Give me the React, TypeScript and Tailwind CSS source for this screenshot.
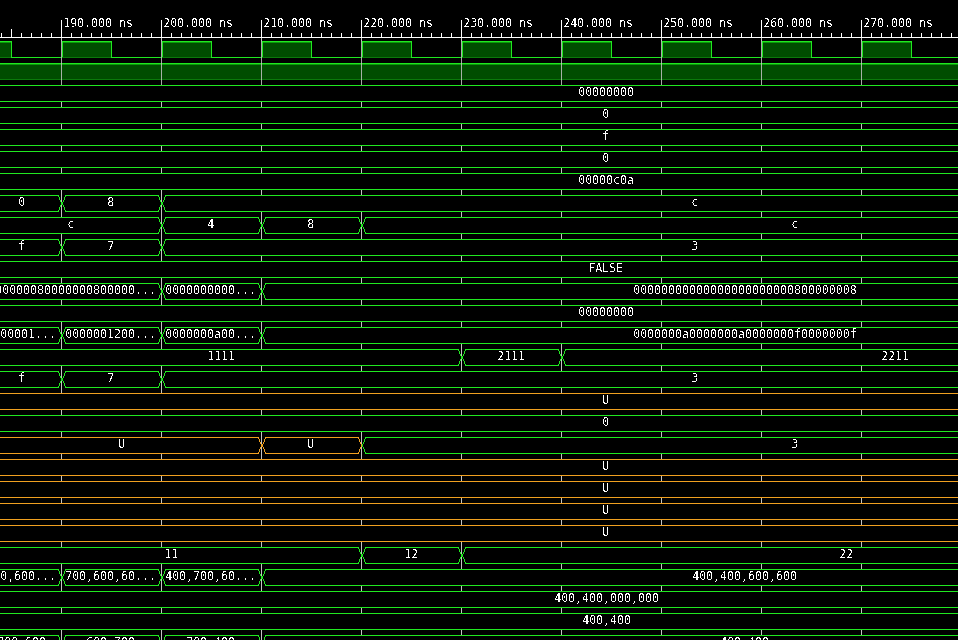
import React from 'react';

const GREEN = '#20e820';
const ORANGE = '#f0a020';
const GRID = '#c4c4c4';
const MAJORS = [61, 161, 261, 361, 461, 561, 661, 761, 861];
const WIDTH = 958;
const CHAR = 7;

interface Label {
  x: number;
  text: string;
  start?: boolean; // left aligned, used by the long packed vectors
}

interface Trace {
  edges?: number[];
  labels: Label[];
  orange?: boolean;
  orangeUntil?: number;
}

const mid = (x: number, text: string): Label => ({ x, text });
const from = (x: number, text: string): Label => ({ x, text, start: true });

const traces: Trace[] = [
  { labels: [mid(606, '00000000')] },
  { labels: [mid(606, '0')] },
  { labels: [mid(606, 'f')] },
  { labels: [mid(606, '0')] },
  { labels: [mid(606, '00000c0a')] },
  { edges: [61, 161], labels: [mid(22, '0'), mid(111, '8'), mid(695, 'c')] },
  { edges: [161, 261, 361], labels: [mid(71, 'c'), mid(211, '4'), mid(311, '8'), mid(795, 'c')] },
  { edges: [61, 161], labels: [mid(22, 'f'), mid(111, '7'), mid(695, '3')] },
  { labels: [mid(606, 'FALSE')] },
  {
    edges: [161, 261],
    labels: [
      from(-5, '00000080000000800000...'),
      from(165, '0000000000...'),
      from(633, '00000000000000000000000800000008'),
    ],
  },
  { labels: [mid(606, '00000000')] },
  {
    edges: [61, 161, 261],
    labels: [
      from(0, '00001...'),
      from(65, '0000001200...'),
      from(165, '0000000a00...'),
      from(633, '0000000a0000000a0000000f0000000f'),
    ],
  },
  { edges: [461, 561], labels: [mid(221, '1111'), mid(511, '2111'), mid(895, '2211')] },
  { edges: [61, 161], labels: [mid(22, 'f'), mid(111, '7'), mid(695, '3')] },
  { orange: true, labels: [mid(606, 'U')] },
  { labels: [mid(606, '0')] },
  { edges: [261, 361], orangeUntil: 361, labels: [mid(122, 'U'), mid(311, 'U'), mid(795, '3')] },
  { orange: true, labels: [mid(606, 'U')] },
  { orange: true, labels: [mid(606, 'U')] },
  { orange: true, labels: [mid(606, 'U')] },
  { orange: true, labels: [mid(606, 'U')] },
  { edges: [361, 461], labels: [mid(171, '11'), mid(411, '12'), mid(846, '22')] },
  {
    edges: [61, 161, 261],
    labels: [
      from(0, '0,600...'),
      from(65, '700,600,60...'),
      from(165, '400,700,60...'),
      from(692, '400,400,600,600'),
    ],
  },
  { labels: [mid(607, '400,400,000,000')] },
  { labels: [mid(607, '400,400')] },
  { edges: [61, 161, 261], labels: [mid(22, '700,600'), mid(111, '600,700'), mid(211, '700,400'), mid(745, '400,400')] },
];

function Ruler() {
  const ticks = [];
  for (let x = 1; x < WIDTH; x += 10) ticks.push(x);
  return (
    <svg width={WIDTH} height={41} className="block">
      {/* threshold the glyph edges so the text looks like the viewer's bitmap font */}
      <defs>
        <filter id="crisp" x="-5%" y="-20%" width="110%" height="140%" colorInterpolationFilters="sRGB">
          <feComponentTransfer>
            <feFuncA type="discrete" tableValues="0 0 0 1 1" />
          </feComponentTransfer>
        </filter>
      </defs>
      <g shapeRendering="crispEdges">
        {ticks.map((x) => (
          <rect key={x} x={x} y={x === 11 ? 29 : 33} width={1} height={x === 11 ? 8 : 4} fill="#fff" />
        ))}
        <rect x={0} y={37} width={WIDTH} height={1} fill="#fff" />
        {MAJORS.map((x) => (
          <g key={x}>
            <rect x={x} y={20} width={1} height={17} fill="#fff" />
            <rect x={x} y={38} width={1} height={3} fill={GRID} />
          </g>
        ))}
      </g>
      {MAJORS.map((x, i) => (
        <text key={x} x={x + 2.15} y={27} filter="url(#crisp)" className="fill-white text-[11.627px]">
          {190 + i * 10}.000 ns
        </text>
      ))}
    </svg>
  );
}

function Pulse({ x, w }: { x: number; w: number }) {
  return (
    <g>
      <rect x={x} y={0} width={w} height={16} fill="#004d00" />
      <rect x={x} y={1} width={w} height={1} fill="#0a9a0a" />
      <rect x={x} y={0} width={w + 1} height={1} fill={GREEN} />
      <rect x={x} y={16} width={w} height={1} fill="#0a7a0a" />
      <rect x={x + 1} y={0} width={1} height={16} fill={GREEN} />
      <rect x={x + w} y={0} width={1} height={17} fill={GREEN} />
      <rect x={x + w} y={16} width={50} height={1} fill={GREEN} />
    </g>
  );
}

function ClockRow() {
  return (
    <svg width={WIDTH} height={22} className="block" shapeRendering="crispEdges">
      {[-39, 61, 161, 261, 361, 461, 561, 661, 761, 861].map((x) => (
        <Pulse key={x} x={x} w={50} />
      ))}
      {MAJORS.map((x) => (
        <rect key={x} x={x} y={0} width={1} height={22} fill={GRID} opacity={0.85} />
      ))}
    </svg>
  );
}

function BusyRow() {
  return (
    <svg width={WIDTH} height={22} className="block" shapeRendering="crispEdges">
      <rect x={0} y={0} width={WIDTH} height={16} fill="#004d00" />
      <rect x={0} y={1} width={WIDTH} height={1} fill="#0a9a0a" />
      <rect x={0} y={0} width={WIDTH} height={1} fill={GREEN} />
      <rect x={0} y={16} width={WIDTH} height={1} fill="#0a7a0a" />
      {MAJORS.map((x) => (
        <rect key={x} x={x} y={0} width={1} height={22} fill={GRID} opacity={0.85} />
      ))}
    </svg>
  );
}

// pixel offset of the crossing's arms for each scanline of a 17px tall trace
const CROSS = [1, 2, 3, 4, 5, 6, 7, 8, 9, 10, 11, 12, 13, 14, 15].map((y) => ({
  y,
  d: Math.round((Math.abs(y - 8) * 3) / 8),
}));

function Crossing({ x, left, right }: { x: number; left: string; right: string }) {
  return (
    <g>
      {CROSS.map(({ y, d }) => (
        <g key={y}>
          <rect x={x - d} y={y} width={1} height={1} fill={left} />
          <rect x={x + 1 + d} y={y} width={1} height={1} fill={right} />
        </g>
      ))}
    </g>
  );
}

function VectorRow({ edges = [], labels, orange, orangeUntil }: Trace) {
  const colorAt = (x: number) => (orange || (orangeUntil !== undefined && x < orangeUntil) ? ORANGE : GREEN);
  const stops = [-10, ...edges, WIDTH + 10];

  return (
    <svg width={WIDTH} height={22} className="block">
      <g shapeRendering="crispEdges">
        {MAJORS.map((x) => (
          <rect key={x} x={x} y={17} width={1} height={5} fill={GRID} />
        ))}
        {edges.map((x) => (
          <rect key={x} x={x} y={0} width={1} height={17} fill={GRID} />
        ))}
        {stops.slice(1).map((end, i) => {
          const start = stops[i];
          const left = i === 0 ? start : start + 4;
          const right = end > WIDTH ? end : end - 2;
          const c = colorAt(start + 1);
          return (
            <g key={end}>
              <rect x={left} y={0} width={right - left} height={1} fill={c} />
              <rect x={left} y={16} width={right - left} height={1} fill={c} />
            </g>
          );
        })}
        {edges.map((x) => (
          <Crossing key={x} x={x} left={colorAt(x - 1)} right={colorAt(x + 1)} />
        ))}
      </g>
      {labels.map((l) => {
        // glyphs sit on whole pixels so the thresholded strokes stay even
        const left = l.start ? l.x : Math.floor(l.x - (l.text.length * CHAR) / 2);
        return (
          <text key={l.text + l.x} x={left + 0.15} y={11} filter="url(#crisp)" className="fill-white text-[11.627px]">
            {l.text}
          </text>
        );
      })}
    </svg>
  );
}

export default function App() {
  return (
    <div className="w-[958px] h-[640px] overflow-hidden bg-black font-['DejaVu_Sans_Mono',monospace]">
      <Ruler />
      <ClockRow />
      <BusyRow />
      {traces.map((t, i) => (
        <VectorRow key={i} {...t} />
      ))}
    </div>
  );
}
